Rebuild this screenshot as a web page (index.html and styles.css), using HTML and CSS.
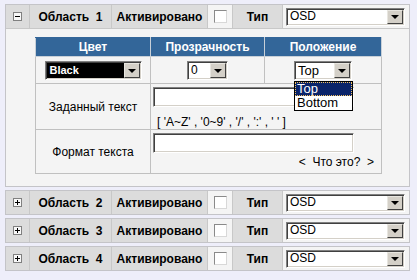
FILE: index.html
```html
<!DOCTYPE html>
<html>
<head>
<meta charset="utf-8">
<link rel="stylesheet" href="styles.css">
</head>
<body>
<div class="page">
  <div class="region">
    <div class="hdr open">
      <div class="c tgl"><span class="tg"><span class="h"></span></span></div>
      <div class="c nm">Область&nbsp;&nbsp;1</div>
      <div class="c act">Активировано</div>
      <div class="c lt"><span class="cb"></span></div>
      <div class="c typ">Тип</div>
      <div class="c lt sc"><div class="select osd"><span class="val">OSD</span><span class="btn"><i></i></span></div></div>
    </div>
    <div class="body">
      <table class="inner">
        <colgroup><col class="c1"><col class="c2"><col class="c3"></colgroup>
        <tr class="th"><th>Цвет</th><th>Прозрачность</th><th>Положение</th></tr>
        <tr class="r1">
          <td><div class="cell1"><div class="select blk"><span class="val">Black</span><span class="btn"><i></i></span></div></div></td>
          <td><div class="cell1"><div class="select zero"><span class="val">0</span><span class="btn"><i></i></span></div></div></td>
          <td><div class="cell1"><div class="select top"><span class="val">Top</span><span class="btn"><i></i></span>
            <div class="drop"><div class="opt on">Top</div><div class="opt">Bottom</div></div></div></div></td>
        </tr>
        <tr class="r2">
          <td class="lbl">Заданный текст</td>
          <td colspan="2" class="fld"><div class="cell2"><div class="inp"></div><div class="hint">[ 'A~Z' , '0~9' , '/' , ':' , ' ' ]</div></div></td>
        </tr>
        <tr class="r3">
          <td class="lbl">Формат текста</td>
          <td colspan="2" class="fld"><div class="cell3"><div class="inp"></div><div class="what">&lt;&nbsp; Что это?&nbsp; &gt;</div></div></td>
        </tr>
      </table>
    </div>
  </div>
  <div class="region">
    <div class="hdr">
      <div class="c tgl"><span class="tg"><span class="h"></span><span class="v"></span></span></div>
      <div class="c nm">Область&nbsp;&nbsp;2</div>
      <div class="c act">Активировано</div>
      <div class="c lt"><span class="cb"></span></div>
      <div class="c typ">Тип</div>
      <div class="c lt sc"><div class="select osd"><span class="val">OSD</span><span class="btn"><i></i></span></div></div>
    </div>
  </div>
  <div class="region">
    <div class="hdr">
      <div class="c tgl"><span class="tg"><span class="h"></span><span class="v"></span></span></div>
      <div class="c nm">Область&nbsp;&nbsp;3</div>
      <div class="c act">Активировано</div>
      <div class="c lt"><span class="cb"></span></div>
      <div class="c typ">Тип</div>
      <div class="c lt sc"><div class="select osd"><span class="val">OSD</span><span class="btn"><i></i></span></div></div>
    </div>
  </div>
  <div class="region">
    <div class="hdr">
      <div class="c tgl"><span class="tg"><span class="h"></span><span class="v"></span></span></div>
      <div class="c nm">Область&nbsp;&nbsp;4</div>
      <div class="c act">Активировано</div>
      <div class="c lt"><span class="cb"></span></div>
      <div class="c typ">Тип</div>
      <div class="c lt sc"><div class="select osd"><span class="val">OSD</span><span class="btn"><i></i></span></div></div>
    </div>
  </div>
</div>
</body>
</html>
```
FILE: styles.css
```css
html, body {
  margin: 0;
  padding: 0;
  background: #eeeefa;
  font-family: "Liberation Sans", Arial, sans-serif;
  font-size: 12px;
  line-height: 14px;
  color: #000;
}
.page {
  padding: 4px 7px 0 5px;
  display: flex;
  flex-direction: column;
  gap: 3px;
}
.region {
  border: 1px solid #c4c4c8;
  background: #f4f4f4;
}
.hdr {
  display: grid;
  grid-template-columns: 23px 81px 95px 24px 49px 1fr;
  gap: 1px;
  background: #c8c8c8;
  height: 23px;
}
.hdr.open {
  border-bottom: 1px solid #c8c8c8;
}
.c {
  background: #dcdcdc;
  display: flex;
  align-items: center;
  justify-content: center;
  font-weight: bold;
}
.c.lt { background: #f4f4f4; }
.c.sc { justify-content: flex-start; padding-left: 3px; }
.tg {
  position: relative;
  width: 9px;
  height: 9px;
  box-sizing: border-box;
  border: 1px solid #808080;
  background: #f8f8f8;
}
.tg .h {
  position: absolute;
  left: 1px; top: 3px;
  width: 5px; height: 1px;
  background: #000;
}
.tg .v {
  position: absolute;
  left: 3px; top: 1px;
  width: 1px; height: 5px;
  background: #000;
}
.cb {
  width: 13px;
  height: 13px;
  box-sizing: border-box;
  border: 1px solid;
  border-color: #8a8a8a #d8d8d8 #d8d8d8 #8a8a8a;
  background: #fff;
}

/* classic select */
.select {
  position: relative;
  display: inline-flex;
  align-items: center;
  box-sizing: border-box;
  height: 19px;
  border: 1px solid;
  border-color: #808080 #ffffff #ffffff #808080;
  box-shadow: inset 1px 1px #404040, inset -1px -1px #d4d0c8;
  background: #fff;
  font-weight: normal;
  text-align: left;
}
.select .val {
  flex: 1;
  padding-left: 3px;
  font-size: 12px;
  line-height: 15px;
}
.select .btn {
  width: 16px;
  height: 15px;
  margin-right: 1px;
  box-sizing: border-box;
  border: 1px solid;
  border-color: #e8e6e0 #404040 #404040 #e8e6e0;
  background: #d4d0c8;
  display: flex;
  align-items: center;
  justify-content: center;
}
.select .btn i {
  width: 0; height: 0;
  border-left: 4px solid transparent;
  border-right: 4px solid transparent;
  border-top: 4px solid #000;
  margin-top: 1px;
}
.select.osd { width: 119px; height: 18px; }
.select.osd .btn { height: 14px; }
.select.blk { width: 97px; }
.select.blk .val {
  background: #000;
  color: #fff;
  font-weight: bold;
  margin: 1px 0 1px 1px;
  height: 15px;
  font-size: 11px;
}
.select.zero { width: 41px; }
.select.top { width: 58px; }
.select.top .val { font-size: 13px; }
.drop {
  position: absolute;
  left: -1px;
  top: 19px;
  width: 59px;
  box-sizing: border-box;
  border: 1px solid #000;
  background: #fff;
  font-size: 13px;
}
.opt {
  height: 14px;
  line-height: 14px;
  padding-left: 2px;
}
.opt.on {
  background: #0a246a;
  color: #fff;
  outline: 1px dotted #f0c060;
  outline-offset: -1px;
}

.body {
  padding: 8px 0 12px 29px;
}
.inner {
  border-collapse: collapse;
  table-layout: fixed;
  width: 346px;
  border: 1px solid #c0c0c0;
}
.inner col.c1 { width: 115px; }
.inner col.c2 { width: 114px; }
.inner col.c3 { width: 117px; }
.inner td, .inner th {
  border: 1px solid #c0c0c0;
  padding: 0;
}
.inner th {
  background: #336699;
  color: #fff;
  font-weight: bold;
  height: 18px;
  font-size: 12px;
}
.inner tr.th th { border-color: #c8d0d8; border-top-color: #336699; }
.cell1 {
  height: 26px;
  display: flex;
  align-items: center;
  justify-content: center;
}
.lbl { text-align: center; }
.fld { vertical-align: top; }
.cell2, .cell3 {
  box-sizing: border-box;
  padding: 3px 0 0 2px;
}
.cell2 { height: 45px; }
.cell3 { height: 43px; }
.inp {
  width: 201px;
  height: 20px;
  box-sizing: border-box;
  border: 1px solid;
  border-color: #808080 #ffffff #ffffff #808080;
  box-shadow: inset 1px 1px #404040, inset -1px -1px #d4d0c8;
  background: #fff;
}
.hint {
  font-size: 12px;
  margin: 8px 0 0 4px;
}
.what {
  text-align: right;
  padding-right: 7px;
  margin-top: 2px;
}
```
